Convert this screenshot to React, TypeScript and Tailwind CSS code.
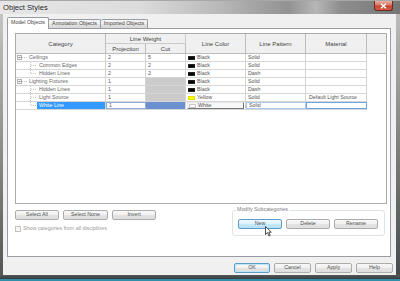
import React from "react";

type Row = {
  name: string;
  level: 0 | 1;
  last?: boolean;
  proj: string;
  cut: string;
  cutGray?: boolean;
  color: string;
  swatch: string;
  pattern: string;
  material: string;
};

const rows: Row[] = [
  { name: "Ceilings", level: 0, proj: "2", cut: "5", color: "Black", swatch: "#000000", pattern: "Solid", material: "" },
  { name: "Common Edges", level: 1, proj: "2", cut: "2", color: "Black", swatch: "#000000", pattern: "Solid", material: "" },
  { name: "Hidden Lines", level: 1, last: true, proj: "2", cut: "2", color: "Black", swatch: "#000000", pattern: "Dash", material: "" },
  { name: "Lighting Fixtures", level: 0, proj: "1", cut: "", cutGray: true, color: "Black", swatch: "#000000", pattern: "Solid", material: "" },
  { name: "Hidden Lines", level: 1, proj: "1", cut: "", cutGray: true, color: "Black", swatch: "#000000", pattern: "Dash", material: "" },
  { name: "Light Source", level: 1, proj: "1", cut: "", cutGray: true, color: "Yellow", swatch: "#ffff00", pattern: "Solid", material: "Default Light Source" },
];

function Tree({ level, last }: { level: 0 | 1; last?: boolean }) {
  return (
    <svg className="absolute left-0 top-0" width="90" height="8" viewBox="0 0 90 8">
      {level === 0 ? (
        <g>
          <rect x="1.5" y="1.5" width="4" height="4" fill="#fbfbfb" stroke="#b0b0b0" strokeWidth="1" />
          <line x1="2.5" y1="3.5" x2="4.5" y2="3.5" stroke="#777" strokeWidth="1" />
          <line x1="6" y1="3.5" x2="12" y2="3.5" stroke="#c4c4c4" strokeWidth="1" strokeDasharray="1 1" />
        </g>
      ) : (
        <g>
          <line x1="14.5" y1="0" x2="14.5" y2={last ? 3.5 : 8} stroke="#c4c4c4" strokeWidth="1" strokeDasharray="1 1" />
          <line x1="15" y1="3.5" x2="21" y2="3.5" stroke="#c4c4c4" strokeWidth="1" strokeDasharray="1 1" />
        </g>
      )}
    </svg>
  );
}

const btnStyles = {
  normal:
    "border-[#acacac] bg-[linear-gradient(to_bottom,#f8f8f8_0%,#f0f0f0_50%,#e4e4e4_51%,#dedede_100%)]",
  hover:
    "border-[#5d9cc9] bg-[linear-gradient(to_bottom,#eef8fd_0%,#dff2fc_50%,#c8eafc_51%,#b5dff6_100%)]",
  focus:
    "border-[#5d9cc9] shadow-[inset_0_0_0_1px_#bfe6f8] bg-[linear-gradient(to_bottom,#f8f8f8_0%,#f0f0f0_50%,#e4e4e4_51%,#dedede_100%)]",
};

function Btn({
  label,
  w,
  variant = "normal",
  children,
}: {
  label: string;
  w: string;
  variant?: "normal" | "hover" | "focus";
  children?: React.ReactNode;
}) {
  return (
    <div
      className={`relative ${w} h-[10px] rounded-[2px] border flex items-center justify-center text-[5.3px] leading-none text-[#505050] ${btnStyles[variant]}`}
    >
      {label}
      {children}
    </div>
  );
}

export default function App() {
  return (
    <div className="w-[400px] h-[281px] flex flex-col overflow-hidden font-['Liberation_Sans',Arial,sans-serif] bg-[#2f8ea8]">
      {/* Title bar */}
      <div className="h-[14px] flex items-start bg-[linear-gradient(to_right,#e6e6e6_0%,#dcdcdc_35%,#b8b8b8_55%,#929292_72%,#b6b6b6_79%,#8e8e8e_85%,#767676_100%)] border-t border-[#a8a8a8]">
        <div className="pl-[3px] pt-[1px] text-[7.6px] leading-[11px] text-[#222] [text-shadow:0_0_3px_#ffffff]">
          Object Styles
        </div>
        <div className="ml-auto mr-[7px] w-[19px] h-[10px] rounded-b-[3px] border border-t-0 border-[#6a2a20] bg-[linear-gradient(to_bottom,#eab0a4_0%,#da7562_45%,#c8432f_55%,#d45f48_100%)] flex items-center justify-center">
          <svg width="7" height="6" viewBox="0 0 7 6">
            <path d="M1 0.8 L6 5.2 M6 0.8 L1 5.2" stroke="#ffffff" strokeWidth="1.4" />
          </svg>
        </div>
      </div>

      {/* Body with side frames */}
      <div className="flex h-[261px]">
        <div className="w-[3px] bg-[linear-gradient(to_bottom,#c4c4c4_0%,#8e8e8e_50%,#555555_100%)]" />
        <div className="w-[393px] bg-[#f0f0f0] flex flex-col">
          {/* Tabs */}
          <div className="mt-[3px] h-[11px] flex items-end pl-[4px] text-[5.3px] leading-none text-[#444]">
            <div className="relative z-10 w-[42px] h-[12px] -mb-px bg-white border border-b-0 border-[#9a9ca3] rounded-t-[2px] flex items-center justify-center pb-[1px]">
              Model Objects
            </div>
            <div className="w-[52px] h-[9px] border border-b-0 border-l-0 border-[#9a9ca3] rounded-tr-[2px] bg-[linear-gradient(to_bottom,#f4f4f4_0%,#eeeeee_50%,#e2e2e2_51%,#d8d8d8_100%)] flex items-center justify-center">
              Annotation Objects
            </div>
            <div className="w-[47px] h-[9px] border border-b-0 border-l-0 border-[#9a9ca3] rounded-t-[2px] bg-[linear-gradient(to_bottom,#f4f4f4_0%,#eeeeee_50%,#e2e2e2_51%,#d8d8d8_100%)] flex items-center justify-center">
              Imported Objects
            </div>
          </div>

          {/* Tab panel */}
          <div className="ml-[4px] w-[384px] h-[229px] bg-white border border-[#9a9ca3] flex flex-col pl-[7px] pt-[4px]">
            {/* Grid */}
            <div className="w-[372px] h-[171px] border border-[#ababab] bg-white flex flex-col">
              {/* Header */}
              <div className="grid grid-cols-[90px_40px_40px_60px_60px_61px_19px] grid-rows-[10px_10px] bg-[#f0f0f0] text-[6px] leading-none text-[#444]">
                <div className="row-span-2 flex items-center justify-center border-r border-b border-[#bdbdbd]">Category</div>
                <div className="col-span-2 flex items-center justify-center border-r border-b border-[#cacaca]">Line Weight</div>
                <div className="row-span-2 flex items-center justify-center border-r border-b border-[#bdbdbd]">Line Color</div>
                <div className="row-span-2 flex items-center justify-center border-r border-b border-[#bdbdbd]">Line Pattern</div>
                <div className="row-span-2 flex items-center justify-center border-r border-b border-[#bdbdbd]">Material</div>
                <div className="row-span-2 border-b border-[#bdbdbd]" />
                <div className="flex items-center justify-center border-r border-b border-[#bdbdbd]">Projection</div>
                <div className="flex items-center justify-center border-r border-b border-[#bdbdbd]">Cut</div>
              </div>

              {/* Rows */}
              <div className="flex flex-col text-[5.3px] leading-none text-[#555]">
                {rows.map((r, i) => (
                  <div key={i} className="flex h-[8px] w-[351px] border-b border-[#d6d6d6]">
                    <div className="relative w-[90px] h-full border-r border-[#d2d2d2] flex items-center">
                      <Tree level={r.level} last={r.last} />
                      <span className={r.level === 0 ? "pl-[13px] text-[#666]" : "pl-[23px] text-[#666]"}>{r.name}</span>
                    </div>
                    <div className="w-[40px] h-full border-r border-[#d2d2d2] flex items-center pl-[2px]">{r.proj}</div>
                    <div className={`w-[40px] h-full border-r border-[#d2d2d2] flex items-center pl-[2px] ${r.cutGray ? "bg-[#cbcbcb]" : ""}`}>
                      {r.cut}
                    </div>
                    <div className="w-[60px] h-full border-r border-[#d2d2d2] flex items-center pl-[2px]">
                      <span
                        className="inline-block w-[7px] h-[4px] border border-[#555] mr-[2px]"
                        style={{ backgroundColor: r.swatch, borderColor: r.swatch === "#ffff00" ? "#e6e600" : "#222" }}
                      />
                      {r.color}
                    </div>
                    <div className="w-[60px] h-full border-r border-[#d2d2d2] flex items-center pl-[2px]">{r.pattern}</div>
                    <div className="w-[61px] h-full border-r border-[#d2d2d2] flex items-center pl-[3px]">{r.material}</div>
                  </div>
                ))}

                {/* Selected row */}
                <div className="flex h-[8px] w-[351px] border-b border-[#d6d6d6]">
                  <div className="relative w-[90px] h-full border-r border-[#d2d2d2] flex items-center">
                    <Tree level={1} last />
                    <div className="ml-[21px] h-full flex-1 bg-[#3399ff] text-white flex items-center pl-[2px]">White Line</div>
                  </div>
                  <div className="w-[40px] h-full border border-[#8aaed8] bg-white flex items-center pl-[2px]">1</div>
                  <div className="w-[40px] h-full bg-[#6b8fcf] border-r border-[#d2d2d2]" />
                  <div className="w-[60px] h-full border-r border-[#d2d2d2] flex items-center pl-[1px]">
                    <div className="w-[57px] h-[7px] bg-[#f7f7f7] border border-t-[#e8e8e8] border-l-[#e8e8e8] border-b-[#777] border-r-[#777] flex items-center pl-[1px]">
                      <span className="inline-block w-[7px] h-[4px] border border-[#c8c8c8] bg-white mr-[2px]" />
                      White
                    </div>
                  </div>
                  <div className="w-[60px] h-full border border-[#a8c8ee] bg-white flex items-center pl-[2px]">Solid</div>
                  <div className="w-[61px] h-full border border-[#6aa5ea] bg-white" />
                </div>
              </div>
            </div>

            {/* Bottom section inside panel */}
            <div className="flex mt-[6px] w-[372px]">
              <div className="flex flex-col">
                <div className="flex gap-[4px]">
                  <Btn label="Select All" w="w-[44px]" />
                  <Btn label="Select None" w="w-[45px]" />
                  <Btn label="Invert" w="w-[44px]" />
                </div>
                <div className="mt-[6px] flex items-center">
                  <div className="w-[6px] h-[6px] border border-[#c2c2c2] bg-[#f6f6f6]" />
                  <span className="ml-[2px] text-[5.3px] leading-none text-[#9a9a9a]">Show categories from all disciplines</span>
                </div>
              </div>
              <div className="relative ml-auto mr-[2px] w-[153px] h-[26px] border border-[#dde4e8] rounded-[3px] flex gap-[4px] pl-[5px] pt-[8px]">
                <span className="absolute -top-[4px] left-[3px] bg-white px-[1px] text-[5.3px] leading-none text-[#7a7a7a]">
                  Modify Subcategories
                </span>
                <Btn label="New" w="w-[44px]" variant="hover">
                  <svg className="absolute left-[26px] top-[6px]" width="7" height="11" viewBox="0 0 7 11">
                    <path d="M0.5 0.5 L0.5 8.5 L2.5 6.6 L4 10 L5.2 9.4 L3.8 6.2 L6.3 6.2 Z" fill="#ffffff" stroke="#222" strokeWidth="0.8" strokeLinejoin="round" />
                  </svg>
                </Btn>
                <Btn label="Delete" w="w-[44px]" />
                <Btn label="Rename" w="w-[44px]" />
              </div>
            </div>
          </div>

          {/* Dialog buttons */}
          <div className="mt-[6px] flex justify-end gap-[4px] pr-[3px]">
            <Btn label="OK" w="w-[36px]" variant="focus" />
            <Btn label="Cancel" w="w-[37px]" />
            <Btn label="Apply" w="w-[37px]" />
            <Btn label="Help" w="w-[37px]" />
          </div>
        </div>
        <div className="w-[4px] bg-[linear-gradient(to_bottom,#bcbcbc_0%,#808080_50%,#454b4d_100%)]" />
      </div>
      <div className="h-[4px] bg-[linear-gradient(to_bottom,#52575a_0%,#393d3f_100%)]" />
      <div className="h-[2px] bg-[#2f8ea8]" />
    </div>
  );
}
